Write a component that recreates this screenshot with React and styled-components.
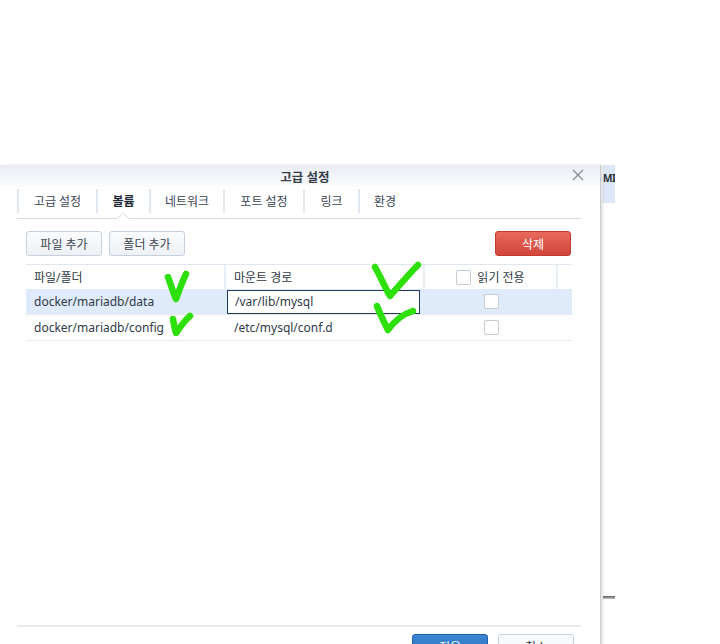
import React from 'react';
import styled, { createGlobalStyle } from 'styled-components';

const GlobalStyle = createGlobalStyle`
  html, body { margin: 0; padding: 0; background: #fff; }
  body {
    font-family: "Noto Sans", "Noto Sans CJK KR", sans-serif;
    font-size: 12px;
    color: #2f3a47;
    overflow: hidden;
  }
`;

const Page = styled.div`
  display: flex;
  padding-top: 165px;
  height: 644px;
  box-sizing: border-box;
`;

const Dialog = styled.div`
  position: relative;
  width: 600px;
  height: 520px;
  background: #fff;
  border-right: 1px solid #c9ccd0;
  box-shadow: 2px 0 2px rgba(0, 0, 0, 0.12);
  display: flex;
  flex-direction: column;
`;

const Header = styled.div`
  height: 22px;
  background: linear-gradient(#e9edf3, #fbfcfd);
  display: flex;
  align-items: center;
  justify-content: center;
  position: relative;
  font-weight: 700;
  font-size: 12.5px;
  color: #333c48;
  padding-left: 10px;
`;

const Close = styled.div`
  position: absolute;
  right: 15px;
  top: 3px;
  width: 14px;
  height: 14px;
`;

const Tabs = styled.div`
  display: flex;
  margin: 0 19px 0 17px;
  height: 31px;
  border-bottom: 1px solid #d5dae0;
  position: relative;
  align-items: flex-start;
`;

const Tab = styled.div`
  height: 24px;
  margin-top: 2px;
  box-sizing: border-box;
  display: flex;
  align-items: center;
  justify-content: center;
  width: ${(p) => p.w}px;
  border-left: 2px solid #e1e7ee;
  font-size: 12px;
  color: ${(p) => (p.active ? '#1f2a36' : '#3b4452')};
  font-weight: ${(p) => (p.active ? 600 : 400)};
  &:last-child { border-right: 2px solid #e1e7ee; }
`;

const Caret = styled.svg`
  position: absolute;
  bottom: -1px;
  left: 100px;
`;

const Panel = styled.div`
  margin: 0 19px 0 17px;
  padding: 12px 9px 0 9px;
  position: relative;
  border-bottom: 2px solid #e8eaed;
  height: 408px;
  flex: none;
  box-sizing: border-box;
`;

const Toolbar = styled.div`
  display: flex;
  gap: 7px;
  margin-bottom: 8px;
`;

const Button = styled.div`
  height: 25px;
  width: 76px;
  box-sizing: border-box;
  border: 1px solid ${(p) => (p.danger ? '#c23a30' : p.primary ? '#1e5ea8' : '#c6d0dc')};
  border-radius: 3px;
  background: ${(p) =>
    p.danger
      ? 'linear-gradient(#e9685c, #d2463b)'
      : p.primary
      ? 'linear-gradient(#3c86d2, #2a6fbd)'
      : 'linear-gradient(#fbfcfd, #edf1f5)'};
  color: ${(p) => (p.danger || p.primary ? '#fff' : '#3b4452')};
  display: flex;
  align-items: center;
  justify-content: center;
  font-size: 12px;
  margin-left: ${(p) => (p.push ? 'auto' : '0')};
  margin-right: ${(p) => (p.push ? '1px' : '0')};
`;

const Table = styled.div`
  border-top: 1px solid #dfe6ef;
`;

const Row = styled.div`
  display: grid;
  grid-template-columns: 200px 199px 133px 15px;
  height: ${(p) => (p.head ? 24 : 25)}px;
  background: ${(p) => (p.selected ? '#dfeafa' : '#fff')};
  border-bottom: ${(p) => (p.head ? 'none' : '1px solid #e6e9ed')};
`;

const Cell = styled.div`
  display: flex;
  align-items: center;
  justify-content: ${(p) => (p.center ? 'center' : 'flex-start')};
  padding-left: ${(p) => (p.center ? 0 : 8)}px;
  border-right: ${(p) => (p.sep ? '2px solid #e8eef5' : 'none')};
  color: #2f3a47;
  font-size: 12px;
  gap: 6px;
  box-sizing: border-box;
  min-width: 0;
`;

const Input = styled.div`
  flex: 1;
  margin: 0 5px 0 -7px;
  height: 24px;
  box-sizing: border-box;
  border: 1px solid #1d3b5c;
  background: #fff;
  display: flex;
  align-items: center;
  padding-left: 7px;
`;

const Box = styled.div`
  width: 15px;
  height: 15px;
  box-sizing: border-box;
  border: 1px solid #c5ccd4;
  border-radius: 2px;
  background: #fff;
`;

const Footer = styled.div`
  display: flex;
  justify-content: flex-end;
  gap: 10px;
  padding: 7px 26px 0 0;
`;

const Side = styled.div`
  width: 12px;
  margin-left: 2px;
  display: flex;
  flex-direction: column;
  overflow: hidden;
`;

const SideBar = styled.div`
  height: 38px;
  background: #dbe7f7;
  font-weight: 700;
  font-size: 10px;
  letter-spacing: -0.5px;
  color: #2a3038;
  padding-top: 6px;
  box-sizing: border-box;
  white-space: nowrap;
`;

const SideLine = styled.div`
  margin-top: 393px;
  height: 3px;
  background: linear-gradient(#5a5a5a, #c8c8c8);
`;

const Marks = styled.svg`
  position: absolute;
  left: 0;
  top: 0;
  pointer-events: none;
`;

export default function App() {
  const tabs = [
    ['고급 설정', 79],
    ['볼륨', 53],
    ['네트워크', 74],
    ['포트 설정', 80],
    ['링크', 55],
    ['환경', 52],
  ];
  return (
    <>
      <GlobalStyle />
      <Page>
        <Dialog>
          <Header>
            고급 설정
            <Close>
              <svg width="14" height="14" viewBox="0 0 14 14">
                <path d="M2 2L12 12M12 2L2 12" stroke="#8a9098" strokeWidth="1.4" />
              </svg>
            </Close>
          </Header>
          <Tabs>
            {tabs.map(([t, w], i) => (
              <Tab key={t} w={w} active={i === 1}>
                {t}
              </Tab>
            ))}
            <Caret width="12" height="6" viewBox="0 0 12 6">
              <path d="M0 6H12L6 0Z" fill="#fff" />
              <path d="M0 5.5L6 0.5L12 5.5" fill="none" stroke="#d5dae0" strokeWidth="1" />
            </Caret>
          </Tabs>
          <Panel>
            <Toolbar>
              <Button>파일 추가</Button>
              <Button>폴더 추가</Button>
              <Button danger push>삭제</Button>
            </Toolbar>
            <Table>
              <Row head>
                <Cell sep>파일/폴더</Cell>
                <Cell sep>마운트 경로</Cell>
                <Cell sep center>
                  <Box />
                  읽기 전용
                </Cell>
                <Cell />
              </Row>
              <Row selected>
                <Cell>docker/mariadb/data</Cell>
                <Cell>
                  <Input>/var/lib/mysql</Input>
                </Cell>
                <Cell center>
                  <Box />
                </Cell>
                <Cell />
              </Row>
              <Row>
                <Cell>docker/mariadb/config</Cell>
                <Cell>/etc/mysql/conf.d</Cell>
                <Cell center>
                  <Box />
                </Cell>
                <Cell />
              </Row>
            </Table>
          </Panel>
          <Footer>
            <Button primary>적용</Button>
            <Button>취소</Button>
          </Footer>
          <Marks width="600" height="200" viewBox="0 165 600 200">
            <g fill="none" stroke="#2ee00a" strokeWidth="6.5" strokeLinecap="round" strokeLinejoin="round">
              <path d="M168 277 C171 285 173 292 176 299 C179 291 182 282 186 274" />
              <path d="M173 319 C174 325 175 330 176 333 C181 326 185 320 190 316" />
              <path d="M375 267 C380 276 385 287 390 296 C398 287 408 275 418 265" />
              <path d="M377 306 C380 314 384 322 388 330 C395 320 403 314 413 311" />
            </g>
          </Marks>
        </Dialog>
        <Side>
          <SideBar>MI</SideBar>
          <SideLine />
        </Side>
      </Page>
    </>
  );
}
